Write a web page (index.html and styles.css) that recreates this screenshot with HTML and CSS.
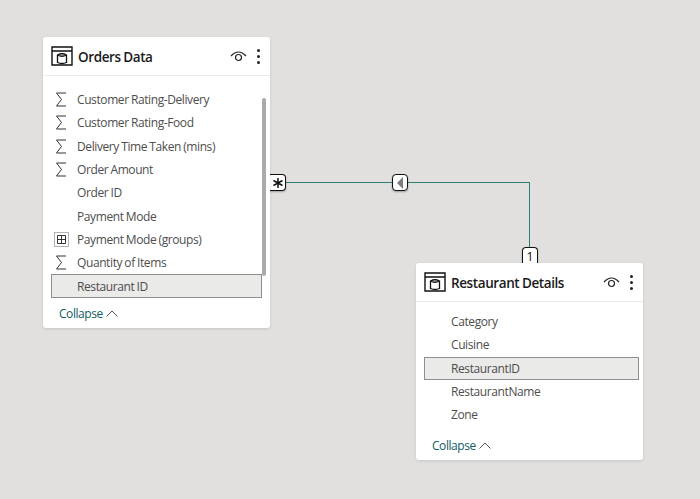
FILE: index.html
```html
<!DOCTYPE html>
<html lang="en">
  <head>
    <meta charset="UTF-8" />
    <title>Model view</title>
    <link rel="stylesheet" href="styles.css">
  </head>
  <body>
    <div class="canvas">
      <!-- relationship line -->
      <div class="line line-h"></div>
      <div class="line line-v"></div>
      <div class="marker marker-many">
        <svg width="12" height="12" viewBox="0 0 12 12"><path d="M6 1V11M1.500 3.500L10.500 8.500M10.500 3.500L1.500 8.500" stroke="#111" stroke-width="1.500" fill="none"/></svg>
      </div>
      <div class="marker marker-dir">
        <svg width="12" height="14" viewBox="0 0 12 14"><path d="M9 1V13L3 7Z" fill="#7d7d7d"/></svg>
      </div>
      <div class="marker marker-one">1</div>

      <div class="table-card orders">
        <div class="card-head">
          <svg class="table-icon" width="22" height="20" viewBox="0 0 22 20"><path d="M1 1H21V19H1ZM1 5H21" fill="none" stroke="#111" stroke-width="1.400"/><path d="M6.500 9Q11 6.500 15.500 9V16.500Q11 18.500 6.500 16.500ZM6.500 9Q11 11.500 15.500 9" fill="none" stroke="#111" stroke-width="1.300"/></svg>
          <span class="card-title">Orders Data</span>
          <svg class="eye" width="17" height="12" viewBox="0 0 17 12"><path d="M1 6Q8.500 -2 16 6" fill="none" stroke="#222" stroke-width="1.200"/><circle cx="8.500" cy="7.500" r="3" fill="none" stroke="#222" stroke-width="1.200"/></svg>
          <span class="dots"><i></i><i></i><i></i></span>
        </div>
        <div class="fields">
          <div class="scrollbar"></div>
          <div class="field"><span class="icon"><svg width="12" height="15" viewBox="0 0 12 15"><path d="M11 1H1.500L6.500 7.500L1.500 14H11" fill="none" stroke="#333" stroke-width="1"/></svg></span>Customer Rating-Delivery</div>
          <div class="field"><span class="icon"><svg width="12" height="15" viewBox="0 0 12 15"><path d="M11 1H1.500L6.500 7.500L1.500 14H11" fill="none" stroke="#333" stroke-width="1"/></svg></span>Customer Rating-Food</div>
          <div class="field"><span class="icon"><svg width="12" height="15" viewBox="0 0 12 15"><path d="M11 1H1.500L6.500 7.500L1.500 14H11" fill="none" stroke="#333" stroke-width="1"/></svg></span>Delivery Time Taken (mins)</div>
          <div class="field"><span class="icon"><svg width="12" height="15" viewBox="0 0 12 15"><path d="M11 1H1.500L6.500 7.500L1.500 14H11" fill="none" stroke="#333" stroke-width="1"/></svg></span>Order Amount</div>
          <div class="field"><span class="icon"></span>Order ID</div>
          <div class="field"><span class="icon"></span>Payment Mode</div>
          <div class="field"><span class="icon">
            <svg width="15" height="15" viewBox="0 0 15 15"><path d="M0.500 0.500H14.500V14.500H0.500Z" fill="none" stroke="#666" stroke-dasharray="1 1"/><path d="M3.500 3.500H11.500V11.500H3.500ZM7.500 3.500V11.500M3.500 7.500H11.500" fill="none" stroke="#333"/></svg>
          </span>Payment Mode (groups)</div>
          <div class="field"><span class="icon"><svg width="12" height="15" viewBox="0 0 12 15"><path d="M11 1H1.500L6.500 7.500L1.500 14H11" fill="none" stroke="#333" stroke-width="1"/></svg></span>Quantity of Items</div>
          <div class="field selected"><span class="icon"></span>Restaurant ID</div>
        </div>
        <div class="collapse">Collapse
          <svg width="12" height="7" viewBox="0 0 12 7"><path d="M0.500 6.500L6 1L11.500 6.500" fill="none" stroke="#555" stroke-width="1"/></svg>
        </div>
      </div>

      <div class="table-card details">
        <div class="card-head">
          <svg class="table-icon" width="22" height="20" viewBox="0 0 22 20"><path d="M1 1H21V19H1ZM1 5H21" fill="none" stroke="#111" stroke-width="1.400"/><path d="M6.500 9Q11 6.500 15.500 9V16.500Q11 18.500 6.500 16.500ZM6.500 9Q11 11.500 15.500 9" fill="none" stroke="#111" stroke-width="1.300"/></svg>
          <span class="card-title">Restaurant Details</span>
          <svg class="eye" width="17" height="12" viewBox="0 0 17 12"><path d="M1 6Q8.500 -2 16 6" fill="none" stroke="#222" stroke-width="1.200"/><circle cx="8.500" cy="7.500" r="3" fill="none" stroke="#222" stroke-width="1.200"/></svg>
          <span class="dots"><i></i><i></i><i></i></span>
        </div>
        <div class="fields">
          <div class="field"><span class="icon"></span>Category</div>
          <div class="field"><span class="icon"></span>Cuisine</div>
          <div class="field selected"><span class="icon"></span>RestaurantID</div>
          <div class="field"><span class="icon"></span>RestaurantName</div>
          <div class="field"><span class="icon"></span>Zone</div>
        </div>
        <div class="collapse">Collapse
          <svg width="12" height="7" viewBox="0 0 12 7"><path d="M0.500 6.500L6 1L11.500 6.500" fill="none" stroke="#555" stroke-width="1"/></svg>
        </div>
      </div>
    </div>
  </body>
</html>
```

FILE: styles.css
```css
html,
body {
  margin: 0;
  padding: 0;
  background: #e1e0de;
}
.canvas {
  position: relative;
  width: 700px;
  height: 499px;
  overflow: hidden;
  font-family: "Open Sans", "Noto Sans", sans-serif;
}
.table-card {
  position: absolute;
  width: 227px;
  background: #fff;
  border-radius: 3px;
  box-shadow: 0 1px 3px rgba(0, 0, 0, 0.12);
}
.orders {
  left: 43px;
  top: 37px;
  height: 291px;
}
.details {
  left: 416px;
  top: 263px;
  height: 197px;
}
.card-head {
  display: flex;
  align-items: center;
  height: 38px;
  padding: 0 8px 0 8px;
  border-bottom: 1px solid #eaeaea;
}
.card-title {
  flex: 1;
  margin-left: 5px;
  padding-top: 2px;
  font-size: 13.5px;
  font-weight: 600;
  letter-spacing: -0.4px;
  word-spacing: -0.5px;
  color: #1a1a1a;
}
.eye {
  margin-right: 7px;
}
.dots {
  display: flex;
  flex-direction: column;
  gap: 3px;
  width: 8px;
  align-items: center;
}
.dots i {
  width: 3px;
  height: 3px;
  border-radius: 50%;
  background: #222;
}
.fields {
  position: relative;
  padding: 12px 8px 0;
}
.details .fields {
  padding: 8px 4px 0 8px;
}
.field {
  display: flex;
  align-items: center;
  height: 23.3px;
  box-sizing: border-box;
  font-size: 12px;
  letter-spacing: -0.4px;
  word-spacing: -0.5px;
  white-space: pre;
  color: #4d4d4d;
}
.icon {
  display: flex;
  align-items: center;
  justify-content: center;
  width: 20px;
  margin-right: 6px;
}
.details .icon {
  margin-right: 7px;
}
.selected {
  background: #eaeae8;
  border: 1px solid #8f8f8f;
}
.selected .icon {
  margin-left: -1px;
}
.scrollbar {
  position: absolute;
  right: 4px;
  top: 22px;
  width: 4px;
  height: 178px;
  border-radius: 2px;
  background: #ababab;
}
.collapse {
  display: flex;
  align-items: center;
  gap: 3px;
  margin: 7px 0 0 16px;
  font-size: 12px;
  letter-spacing: -0.45px;
  color: #0f5c63;
}
.details .collapse {
  margin-top: 11px;
}
.line {
  position: absolute;
  background: #2f7d73;
}
.line-h {
  left: 280px;
  top: 182px;
  width: 250px;
  height: 1px;
}
.line-v {
  left: 529px;
  top: 182px;
  width: 1px;
  height: 66px;
}
.marker {
  position: absolute;
  display: flex;
  align-items: center;
  justify-content: center;
  box-sizing: border-box;
  width: 16px;
  height: 17px;
  background: #fff;
  border: 1px solid #111;
  border-radius: 4px;
  box-shadow: 0 1px 2px rgba(0, 0, 0, 0.3);
  font-size: 13px;
  color: #111;
}
.marker-many {
  left: 270px;
  top: 174px;
  border-left: none;
  border-radius: 0 4px 4px 0;
}
.marker-dir {
  left: 392px;
  top: 174px;
}
.marker-one {
  left: 522px;
  top: 247px;
  border-bottom: none;
  border-radius: 4px 4px 0 0;
}
```
